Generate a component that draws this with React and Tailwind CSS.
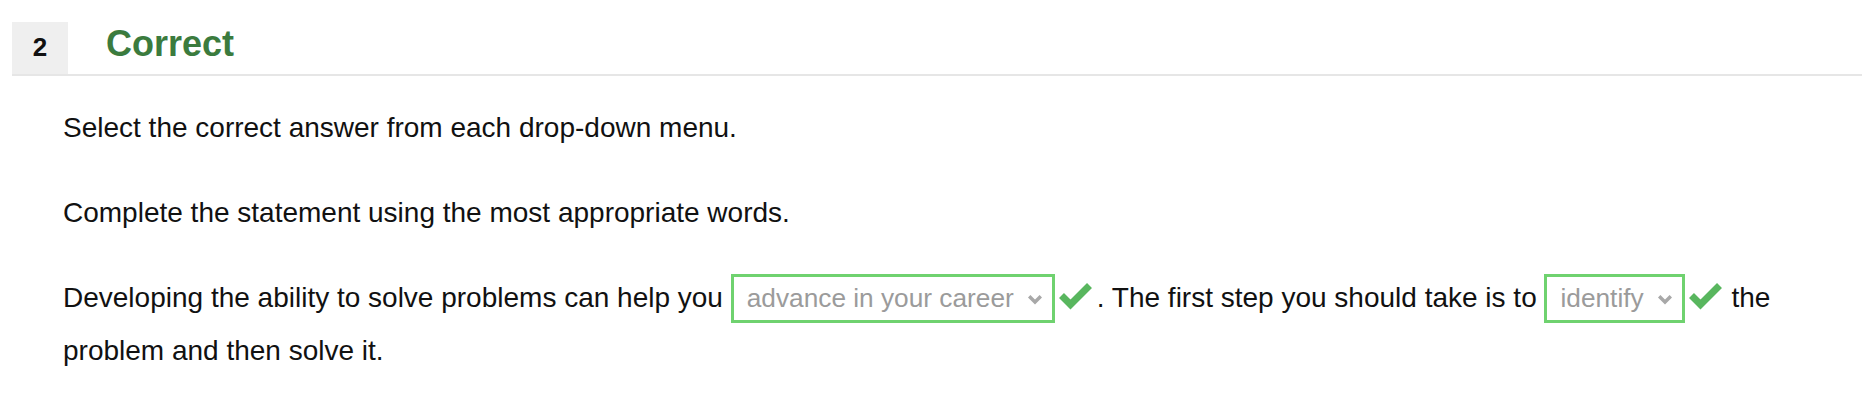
import React from "react";

function Chevron() {
  return (
    <svg
      className="inline-block ml-[13px] align-[2px]"
      width="16"
      height="11"
      viewBox="0 0 16 11"
      fill="none"
    >
      <polyline points="2.2,2.2 8,8 13.8,2.2" stroke="#a8a8a8" strokeWidth="3.4" strokeLinecap="butt" strokeLinejoin="miter" />
    </svg>
  );
}

function Check({ mr }) {
  return (
    <svg
      className={"inline-block ml-[3px] align-[-4px] " + (mr ? "mr-[4px]" : "mr-[1px]")}
      width="35"
      height="31"
      viewBox="0 0 35 31"
      fill="none"
    >
      <polyline points="3.5,15.5 12.5,24.5 31.5,5.5" stroke="#58b65e" strokeWidth="7" strokeLinecap="butt" strokeLinejoin="miter" />
    </svg>
  );
}

function Dropdown({ value }) {
  return (
    <span className="inline-block border-[3px] border-[#6fd26f] pl-[13px] pr-[9px] py-[6.5px] leading-[30px] text-[26.25px] text-[#9b9b9b] bg-white whitespace-nowrap">
      {value}
      <Chevron />
    </span>
  );
}

export default function App() {
  return (
    <div className="w-full min-h-[404px] bg-white text-black" style={{ fontFamily: '"Liberation Sans", Arial, Helvetica, sans-serif' }}>
      <div className="pt-[22px] pl-[12px]">
        <div className="flex items-baseline border-b-2 border-[#e6e6e6]">
          <div className="w-[56px] h-[52px] bg-[#efefef] pt-[11px] text-center text-[26px] leading-[29px] font-bold text-[#111]">
            2
          </div>
          <h2 className="ml-[38px] text-[36px] leading-[36px] font-bold text-[#3b7b3e]">Correct</h2>
        </div>
      </div>
      <div className="px-[63px] text-[28px] leading-[32px] text-[#111]">
        <p className="mt-[36px]">Select the correct answer from each drop-down menu.</p>
        <p className="mt-[53px]">Complete the statement using the most appropriate words.</p>
        <p className="mt-[42px] leading-[53px]">
          Developing the ability to solve problems can help you <Dropdown value="advance in your career" />
          <Check mr />. The first step you should take is to <Dropdown value="identify" />
          <Check /> the problem and then solve it.
        </p>
      </div>
    </div>
  );
}
